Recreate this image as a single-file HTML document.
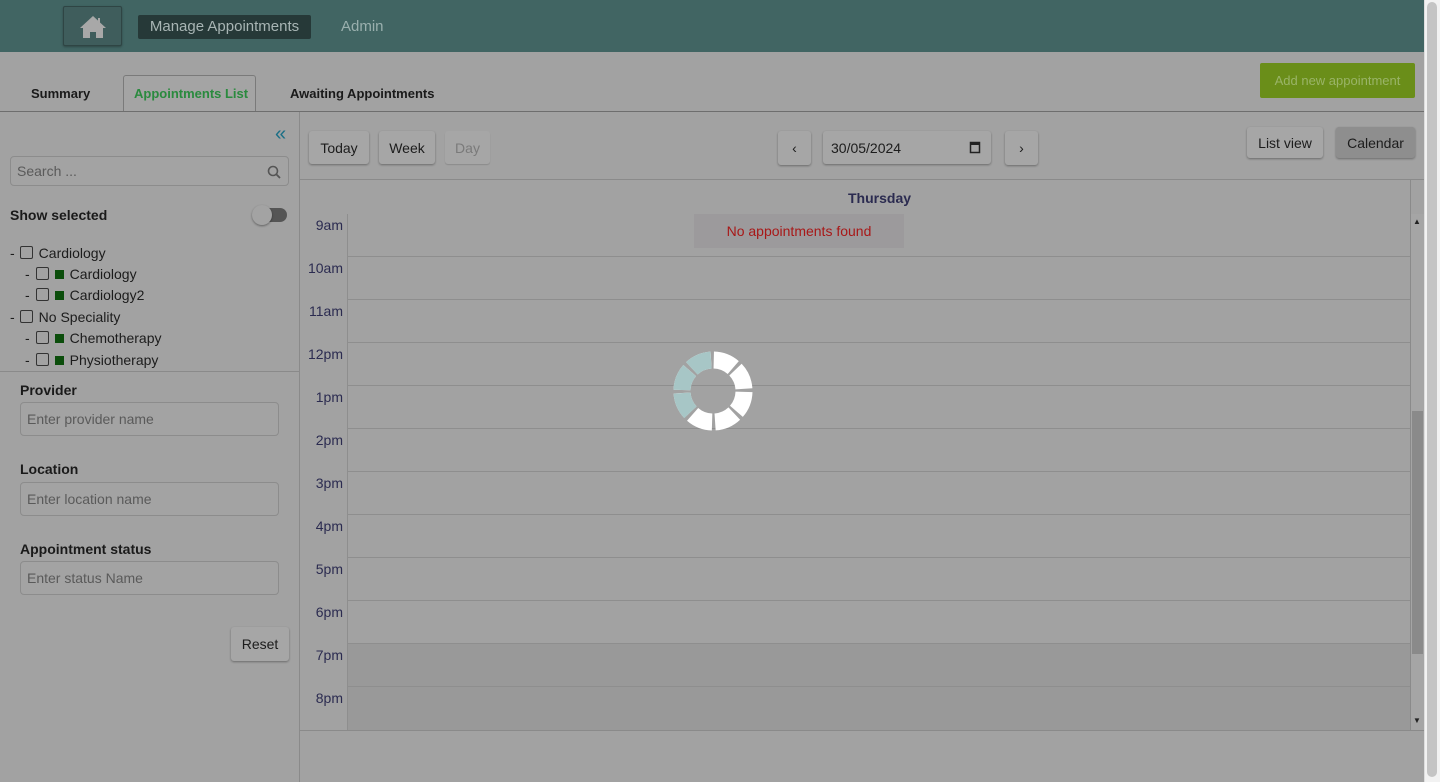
<!DOCTYPE html>
<html><head><meta charset="utf-8"><style>
*{box-sizing:border-box;margin:0;padding:0}
body{width:1440px;height:782px;overflow:hidden;background:#a2a2a2;font-family:"Liberation Sans",sans-serif;position:relative;color:#1a1a1a}
.abs{position:absolute}
.hdr{left:0;top:0;width:1424px;height:52px;background:#416563}
.btn{position:absolute;background:#a6a6a6;border-radius:3px;box-shadow:0 1px 2px rgba(0,0,0,.35);font-size:14px;color:#1c1c1c;display:flex;align-items:center;justify-content:center}
.inp{position:absolute;border:1px solid #8c8c8c;border-radius:4px;background:#a3a3a3;font-size:14px;color:#5a5a5a;padding-left:6px;display:flex;align-items:center}
.lbl{position:absolute;font-size:14px;font-weight:bold;color:#1a1a1a}
.tree{position:absolute;font-size:14px;color:#1c1c1c}
.cb{display:inline-block;width:13px;height:13px;border:1px solid #333;border-radius:2px;vertical-align:-1px;margin:0 6px 0 6px}
.sq{display:inline-block;width:9px;height:9px;background:#0b4d0b;margin-right:6px}
.time{position:absolute;left:300px;width:43px;text-align:right;font-size:14px;color:#2b2b50}
.hl{position:absolute;left:348px;width:1062px;height:1px;background:#8e8e8e}
</style></head><body>
<div class="abs hdr"></div>
<div class="abs" style="left:63px;top:6px;width:59px;height:40px;background:#3f5d5c;border:1px solid #2f4544;border-radius:2px;box-shadow:0 1px 2px rgba(0,0,0,.3)">
<svg width="59" height="40" viewBox="0 0 59 40"><path d="M29 9 L16 21 L19 21 L19 31 L26 31 L26 25 L32 25 L32 31 L39 31 L39 21 L42 21 L36 15.5 L36 11 L34 11 L34 13.6 Z" fill="#a8a8a8"/></svg></div>
<div class="abs" style="left:138px;top:15px;width:173px;height:24px;background:#263938;border-radius:2px;color:#a8b5b4;font-size:15px;line-height:24px;text-align:center">Manage Appointments</div>
<div class="abs" style="left:341px;top:18px;color:#9ab0ae;font-size:15px">Admin</div>

<div class="abs" style="left:31px;top:86px;font-size:13px;font-weight:bold">Summary</div>
<div class="abs" style="left:123px;top:75px;width:133px;height:37px;border:1px solid #7a7a7a;border-bottom:none;border-radius:3px 3px 0 0;background:#a4a4a4"></div>
<div class="abs" style="left:134px;top:86px;font-size:13px;font-weight:bold;color:#2a8a3e">Appointments List</div>
<div class="abs" style="left:290px;top:86px;font-size:13px;font-weight:bold">Awaiting Appointments</div>
<div class="abs" style="left:0;top:111px;width:1424px;height:1px;background:#6e6e6e"></div>
<div class="abs" style="left:1260px;top:63px;width:155px;height:35px;background:#6a8e19;border-radius:2px;color:#9ab468;font-size:13px;line-height:35px;text-align:center">Add new appointment</div>

<div class="abs" style="left:299px;top:112px;width:1px;height:670px;background:#8a8a8a"></div>
<div class="abs" style="left:275px;top:124px;color:#1b6f86;font-size:20px;line-height:20px">«</div>
<div class="inp" style="left:10px;top:156px;width:279px;height:30px">Search ...</div>
<svg class="abs" style="left:267px;top:165px" width="14" height="14"><circle cx="6" cy="6" r="4.5" fill="none" stroke="#555" stroke-width="1.6"/><path d="M9.5 9.5 L13 13" stroke="#555" stroke-width="1.8"/></svg>
<div class="lbl" style="left:10px;top:207px">Show selected</div>
<div class="abs" style="left:255px;top:208px;width:32px;height:14px;border-radius:7px;background:#555"></div>
<div class="abs" style="left:252px;top:205px;width:20px;height:20px;border-radius:50%;background:#a3a3a3;box-shadow:0 1px 2px rgba(0,0,0,.4)"></div>
<div class="tree" style="left:10px;top:245px">-<span class="cb" style="margin-left:5px"></span>Cardiology</div>
<div class="tree" style="left:25px;top:266px">-<span class="cb"></span><span class="sq"></span>Cardiology</div>
<div class="tree" style="left:25px;top:287px">-<span class="cb"></span><span class="sq"></span>Cardiology2</div>
<div class="tree" style="left:10px;top:309px">-<span class="cb" style="margin-left:5px"></span>No Speciality</div>
<div class="tree" style="left:25px;top:330px">-<span class="cb"></span><span class="sq"></span>Chemotherapy</div>
<div class="tree" style="left:25px;top:352px">-<span class="cb"></span><span class="sq"></span>Physiotherapy</div>
<div class="abs" style="left:0;top:371px;width:299px;height:1px;background:#8a8a8a"></div>
<div class="lbl" style="left:20px;top:382px">Provider</div>
<div class="inp" style="left:20px;top:402px;width:259px;height:34px">Enter provider name</div>
<div class="lbl" style="left:20px;top:461px">Location</div>
<div class="inp" style="left:20px;top:482px;width:259px;height:34px">Enter location name</div>
<div class="lbl" style="left:20px;top:541px">Appointment status</div>
<div class="inp" style="left:20px;top:561px;width:259px;height:34px">Enter status Name</div>
<div class="btn" style="left:231px;top:627px;width:58px;height:34px">Reset</div>

<div class="btn" style="left:309px;top:131px;width:60px;height:33px">Today</div>
<div class="btn" style="left:379px;top:131px;width:56px;height:33px">Week</div>
<div class="btn" style="left:445px;top:131px;width:45px;height:33px;color:#7a7a7a;box-shadow:0 1px 1px rgba(0,0,0,.15)">Day</div>
<div class="btn" style="left:778px;top:131px;width:33px;height:34px">‹</div>
<div class="btn" style="left:823px;top:131px;width:168px;height:33px;justify-content:flex-start;padding-left:8px">30/05/2024</div>
<svg class="abs" style="left:969px;top:140px" width="12" height="14"><rect x="1.5" y="2.5" width="9" height="10" fill="none" stroke="#222" stroke-width="1.5"/><rect x="1" y="2" width="10" height="3" fill="#222"/></svg>
<div class="btn" style="left:1005px;top:131px;width:33px;height:34px">›</div>
<div class="btn" style="left:1247px;top:127px;width:76px;height:31px">List view</div>
<div class="btn" style="left:1336px;top:127px;width:79px;height:31px;background:#8e8e8e">Calendar</div>

<div class="abs" style="left:300px;top:179px;width:1124px;height:1px;background:#8a8a8a"></div>
<div class="abs" style="left:848px;top:190px;font-size:14px;font-weight:bold;color:#2b2b50">Thursday</div>
<div class="abs" style="left:347px;top:214px;width:1px;height:516px;background:#8e8e8e"></div>
<div class="abs" style="left:348px;top:643px;width:1062px;height:87px;background:#999"></div>
<div class="abs" style="left:694px;top:214px;width:210px;height:34px;background:#9c9a9c;color:#a81818;font-size:14px;line-height:35px;text-align:center">No appointments found</div>
<div class="time" style="top:217px">9am</div>
<div class="time" style="top:260px">10am</div>
<div class="time" style="top:303px">11am</div>
<div class="time" style="top:346px">12pm</div>
<div class="time" style="top:389px">1pm</div>
<div class="time" style="top:432px">2pm</div>
<div class="time" style="top:475px">3pm</div>
<div class="time" style="top:518px">4pm</div>
<div class="time" style="top:561px">5pm</div>
<div class="time" style="top:604px">6pm</div>
<div class="time" style="top:647px">7pm</div>
<div class="time" style="top:690px">8pm</div>
<div class="hl" style="top:256px"></div><div class="hl" style="top:299px"></div><div class="hl" style="top:342px"></div><div class="hl" style="top:385px"></div><div class="hl" style="top:428px"></div><div class="hl" style="top:471px"></div><div class="hl" style="top:514px"></div><div class="hl" style="top:557px"></div><div class="hl" style="top:600px"></div><div class="hl" style="top:643px"></div><div class="hl" style="top:686px"></div>
<div class="abs" style="left:300px;top:730px;width:1124px;height:1px;background:#8a8a8a"></div>
<div class="abs" style="left:1410px;top:180px;width:1px;height:550px;background:#8a8a8a"></div>
<div class="abs" style="left:1411px;top:214px;width:13px;height:516px;background:#a5a5a5"></div>
<div class="abs" style="left:1412px;top:411px;width:11px;height:243px;background:#8a8a8a"></div>
<div class="abs" style="left:1413px;top:217px;font-size:8px;color:#222">▲</div>
<div class="abs" style="left:1413px;top:716px;font-size:8px;color:#222">▼</div>
<div class="abs" style="left:1424px;top:0;width:16px;height:782px;background:#f2f2f2;border-left:1px solid #ddd"></div>
<div class="abs" style="left:1427px;top:2px;width:10px;height:775px;background:#c4c4c4;border-radius:5px"></div>

<svg class="abs" style="left:672px;top:350px" width="82" height="82" viewBox="0 0 82 82">
<g transform="translate(41 41)" fill="none" stroke-width="17">
<circle r="31" stroke="#fff" stroke-dasharray="21.3 3.05" transform="rotate(-88.6)"/>
<circle r="31" stroke="#a7c6c6" stroke-dasharray="0 121.7 21.3 3.05 21.3 3.05 21.3 100" transform="rotate(-88.6)"/>
</g>
</svg>
</body></html>
